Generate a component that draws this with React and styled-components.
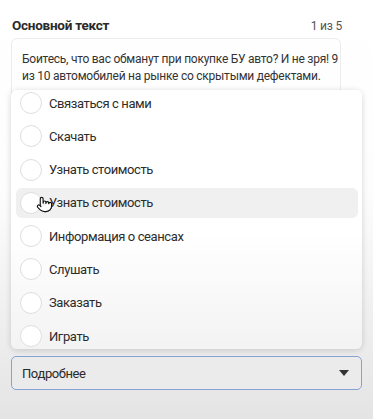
import styled, { createGlobalStyle } from 'styled-components'
import { Pointer } from 'lucide-react'

const GlobalStyle = createGlobalStyle`
  html, body {
    margin: 0;
    padding: 0;
  }
  body {
    font-family: Roboto, 'Liberation Sans', Arial, sans-serif;
    color: #2b2b2b;
    background: linear-gradient(180deg, #ffffff 0%, #fdfdfd 45%, #e4e4e4 100%);
    min-height: 419px;
  }
`

const Page = styled.div`
  width: 373px;
  height: 419px;
  box-sizing: border-box;
  padding: 17px 11px 0 11px;
  overflow: hidden;
`

const Header = styled.div`
  display: flex;
  justify-content: space-between;
  align-items: baseline;
  padding: 0 20px 0 1px;
  height: 21px;
`

const Title = styled.h2`
  margin: 0;
  font-size: 13.5px;
  letter-spacing: -0.25px;
  font-weight: 700;
  color: #2a2a2a;
`

const Counter = styled.span`
  font-size: 12px;
  letter-spacing: -0.2px;
  color: #555;
`

const Field = styled.div`
  position: relative;
`

const TextBox = styled.div`
  width: 330px;
  box-sizing: border-box;
  height: 80px;
  border: 1px solid #ececec;
  border-radius: 6px;
  padding: 12px 10px;
  font-size: 12px;
  letter-spacing: -0.25px;
  line-height: 17px;
  color: #333;
`

const Line = styled.div`
  white-space: nowrap;
`

const Select = styled.div`
  margin-top: 238px;
  height: 34px;
  box-sizing: border-box;
  border: 1.5px solid #86a2d0;
  border-radius: 5px;
  background: #ebebeb;
  display: flex;
  align-items: center;
  justify-content: space-between;
  padding: 0 12px 0 10px;
  font-size: 13px;
  letter-spacing: -0.4px;
  color: #2a2a2a;
`

const Caret = styled.span`
  width: 0;
  height: 0;
  border-left: 5px solid transparent;
  border-right: 5px solid transparent;
  border-top: 6px solid #333;
`

const Menu = styled.div`
  position: absolute;
  left: 0;
  right: 0;
  bottom: 41px;
  height: 259px;
  box-sizing: border-box;
  padding: 0 4px 0 5px;
  overflow: hidden;
  border-radius: 6px;
  background: linear-gradient(180deg, #ffffff 55%, #f3f3f3 100%);
  box-shadow: 0 1px 6px rgba(0, 0, 0, 0.16);
`

const List = styled.ul`
  list-style: none;
  margin: -2px 0 0 0;
  padding: 0;
  display: flex;
  flex-direction: column;
  gap: 3.3px;
`

const Item = styled.li`
  position: relative;
  height: 30px;
  display: flex;
  align-items: center;
  gap: 7px;
  padding-left: 4px;
  border-radius: 6px;
  font-size: 13px;
  letter-spacing: -0.4px;
  color: #2c2c2c;
  background: ${({ $hover }) => ($hover ? '#f0f0f0' : 'transparent')};
`

const Radio = styled.span`
  width: 20px;
  height: 20px;
  border-radius: 50%;
  border: 1px solid #dedede;
  background: #fff;
  flex-shrink: 0;
`

const Cursor = styled.span`
  position: absolute;
  left: 20px;
  top: 8px;
  display: flex;
  color: #111;
`

const options = [
  'Связаться с нами',
  'Скачать',
  'Узнать стоимость',
  'Узнать стоимость',
  'Информация о сеансах',
  'Слушать',
  'Заказать',
  'Играть'
]

const App = () => (
  <>
    <GlobalStyle />
    <Page>
      <Header>
        <Title>Основной текст</Title>
        <Counter>1 из 5</Counter>
      </Header>
      <Field>
        <TextBox>
          <Line>Боитесь, что вас обманут при покупке БУ авто? И не зря! 9</Line>
          <Line>из 10 автомобилей на рынке со скрытыми дефектами.</Line>
        </TextBox>
        <Select>
          <span>Подробнее</span>
          <Caret />
        </Select>
        <Menu>
          <List>
            { options.map((label, i) => (
              <Item key={ i } $hover={ i === 3 }>
                <Radio />
                <span>{ label }</span>
                { i === 3 && (
                  <Cursor>
                    <Pointer size={ 17 } strokeWidth={ 1.6 } fill='#fff' />
                  </Cursor>
                ) }
              </Item>
            )) }
          </List>
        </Menu>
      </Field>
    </Page>
  </>
)

export default App
